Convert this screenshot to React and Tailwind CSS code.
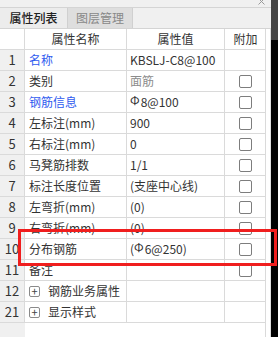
import React from "react";

const rows = [
  { n: "1", name: "名称", blue: true, value: "KBSLJ-C8@100", check: false },
  { n: "2", name: "类别", value: "面筋", muted: true, check: true },
  { n: "3", name: "钢筋信息", blue: true, value: "8@100", bar: true, check: true },
  { n: "4", name: "左标注(mm)", value: "900", check: true },
  { n: "5", name: "右标注(mm)", value: "0", check: true },
  { n: "6", name: "马凳筋排数", value: "1/1", check: true },
  { n: "7", name: "标注长度位置", value: "(支座中心线)", check: true },
  { n: "8", name: "左弯折(mm)", value: "(0)", check: true },
  { n: "9", name: "右弯折(mm)", value: "(0)", check: true },
  { n: "10", name: "分布钢筋", value: "6@250)", bar: true, paren: true, check: true },
  { n: "11", name: "备注", value: "", check: true },
  { n: "12", name: "钢筋业务属性", value: "", plus: true, check: false },
  { n: "21", name: "显示样式", value: "", plus: true, check: false },
];

const Checkbox = () => (
  <span className="block w-[13px] h-[13px] rounded-[2px] border border-[#7d7d7d] bg-white" />
);

const Plus = () => (
  <span className="flex items-center justify-center w-[11px] h-[11px] mr-[8px] rounded-[2px] border border-[#8a8a8a] text-[#444] text-[11px] leading-none">
    +
  </span>
);

const Bar = () => (
  <span className="relative top-[-2px] text-[12px] leading-none mr-[1px]">Φ</span>
);

export default function App() {
  return (
    <div
      className="relative flex w-[278px] h-[337px] overflow-hidden bg-white text-[12px] text-[#333]"
      style={{ fontFamily: '"Noto Sans CJK SC", "Noto Sans", sans-serif' }}
    >
      {/* 左侧面板 */}
      <div className="flex flex-col w-[271px] h-full bg-white">
        {/* 标题条 */}
        <div className="relative h-[8px] bg-[#f0f0f0] border-b border-[#d4d4d4]">
          <svg className="absolute left-[258px] top-[-2px]" width="7" height="7" viewBox="0 0 7 7">
            <path d="M0.5 0.5 L6.5 6.5 M6.5 0.5 L0.5 6.5" stroke="#9a9a9a" strokeWidth="1" />
          </svg>
        </div>

        {/* 标签页 */}
        <div className="flex h-[21px] bg-[#f0f0f0] border-b border-[#d4d4d4]">
          <div className="w-[68px] flex items-center justify-center bg-[#ececec] border-r border-[#d0d0d0] font-medium text-[#222]">
            属性列表
          </div>
          <div className="w-[65px] flex items-center justify-center bg-[#dedede] border-r border-[#d0d0d0] text-[#888]">
            图层管理
          </div>
          <div className="flex-1" />
        </div>

        {/* 表格 */}
        <div className="flex flex-1">
          <div className="flex flex-col w-[266px] border-r border-[#dadada]">
            <div className="grid grid-cols-[25px_102px_98px_41px] h-[21px] border-b border-[#dadada]">
              <div className="border-r border-[#dadada]" />
              <div className="flex items-center justify-center border-r border-[#dadada]">属性名称</div>
              <div className="flex items-center justify-center border-r border-[#dadada]">属性值</div>
              <div className="flex items-center justify-center">附加</div>
            </div>
            {rows.map((r) => (
              <div
                key={r.n}
                className="grid grid-cols-[25px_102px_98px_41px] h-[21px] border-b border-[#dadada]"
              >
                <div className="flex items-center justify-center bg-[#f0f0f0] border-r border-[#dadada] text-[13px]">
                  {r.n}
                </div>
                <div
                  className={`flex items-center pl-[4px] border-r border-[#dadada] whitespace-nowrap ${
                    r.blue ? "text-[#2f5bef]" : ""
                  }`}
                >
                  {r.plus && <Plus />}
                  {r.name}
                </div>
                <div
                  className={`flex items-center pl-[3px] border-r border-[#dadada] whitespace-nowrap ${
                    r.muted ? "text-[#8c8c8c]" : ""
                  }`}
                >
                  {r.paren && "("}
                  {r.bar && <Bar />}
                  {r.value}
                </div>
                <div className="flex items-center justify-center">{r.check && <Checkbox />}</div>
              </div>
            ))}
            <div className="flex flex-1">
              <div className="w-[25px] bg-[#f0f0f0]" />
            </div>
          </div>
          <div className="w-[5px] border-r border-[#dcdcdc]" />
        </div>
      </div>

      {/* 右侧黑条 */}
      <div className="flex flex-col w-[7px] h-full bg-black">
        <div className="h-[40px] bg-[#454545]" />
      </div>

      {/* 红框标注 */}
      <div className="absolute left-[18px] top-[229px] w-[259px] h-[37px] border-[3px] border-[#f01e1e] pointer-events-none" />
    </div>
  );
}
